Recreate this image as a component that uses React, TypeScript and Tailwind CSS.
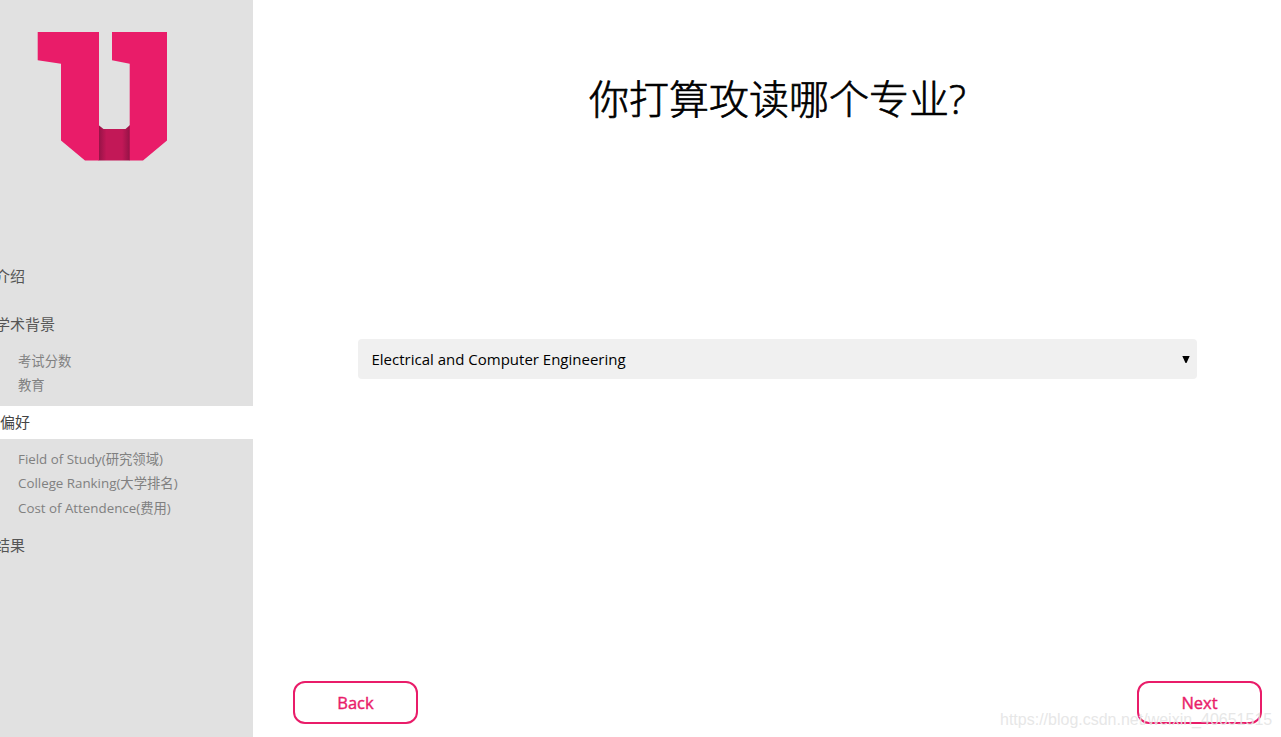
interface Section {
  title: string;
  active?: boolean;
  items: string[];
}

const sections: Section[] = [
  { title: '介绍', items: [] },
  { title: '学术背景', items: ['考试分数', '教育'] },
  { title: '偏好', active: true, items: ['Field of Study(研究领域)', 'College Ranking(大学排名)', 'Cost of Attendence(费用)'] },
  { title: '结果', items: [] },
];

const Logo = () => (
  <svg className="ml-[37px] mt-[31px] h-[131px] w-[131px] shrink-0" viewBox="37 31 131 131">
    <defs>
      <linearGradient id="fold">
        <stop offset="0" stopColor="#941346" />
        <stop offset="0.25" stopColor="#c21857" />
        <stop offset="0.75" stopColor="#c21857" />
        <stop offset="1" stopColor="#941346" />
      </linearGradient>
    </defs>
    <path d="M98.5 125 103.5 129H125.500L130 125V160.500H98.500Z" fill="url(#fold)" />
    <path d="M37.700 32H99V160.500H85L61 140.500V63.700L37.700 60.300Z" fill="#e91c69" />
    <path d="M112 32H167V140.500L143 160.500H129.700V63.700L112 60.300Z" fill="#e91c69" />
  </svg>
);

const Sidebar = () => (
  <aside className="flex w-[253px] shrink-0 flex-col overflow-hidden bg-[#e1e1e1]">
    <Logo />
    <nav className="mt-[97px]">
      {sections.map((section) => (
        <div key={section.title}>
          <div
            className={
              section.active
                ? 'h-[33px] bg-white text-[15px] leading-[33px] text-[#444]'
                : 'h-[33px] text-[15px] leading-[33px] text-[#555]'
            }
          >
            <span
              className={
                section.active ? 'block' : section.items.length ? '-ml-[5px] block' : '-ml-[5px] block pt-px'
              }
            >
              {section.title}
            </span>
          </div>
          <ul className="px-[18px] py-2 text-[13.33px] leading-[24.4px] text-[#808080]">
            {section.items.map((item) => (
              <li key={item}>{item}</li>
            ))}
          </ul>
        </div>
      ))}
    </nav>
  </aside>
);

const NavButton = ({ label }: { label: string }) => (
  <button className="h-[43px] w-[125px] rounded-[12px] border-2 border-[#e91c69] pt-0.5 text-[16.5px] text-[#e91c69] [-webkit-text-stroke:0.4px_#e91c69]">
    {label}
  </button>
);

const App = () => {
  return (
    <div className="relative flex h-[737px] w-[1281px] overflow-hidden bg-white font-['Open_Sans','Noto_Sans_CJK_SC',sans-serif]">
      <Sidebar />
      <main className="flex flex-1 flex-col pl-10 pr-[19px]">
        <h1 className="mt-[69px] h-[60px] text-center text-[40px] font-light leading-[60px] text-black [-webkit-text-stroke:0.7px_black]">
          你打算攻读哪个专业?
        </h1>
        <button className="ml-[65px] mt-[210px] flex h-10 w-[839px] items-center justify-between rounded bg-[#f0f0f0] pl-[13.500px] pr-[7.5px] text-[15px] text-black">
          <span>Electrical and Computer Engineering</span>
          <svg className="h-[7px] w-[8px]" viewBox="0 0 8 7">
            <path d="M0.300 0H7.700L4.500 7H3.500Z" fill="black" />
          </svg>
        </button>
        <div className="mb-[13px] mt-auto flex justify-between">
          <NavButton label="Back" />
          <NavButton label="Next" />
        </div>
      </main>
      <div className="pointer-events-none absolute left-[1000px] top-[708px] whitespace-nowrap font-['Liberation_Sans',sans-serif] text-base text-[#e4e4e4]/90">
        https://blog.csdn.net/weixin_40651515
      </div>
    </div>
  );
};

export default App;
